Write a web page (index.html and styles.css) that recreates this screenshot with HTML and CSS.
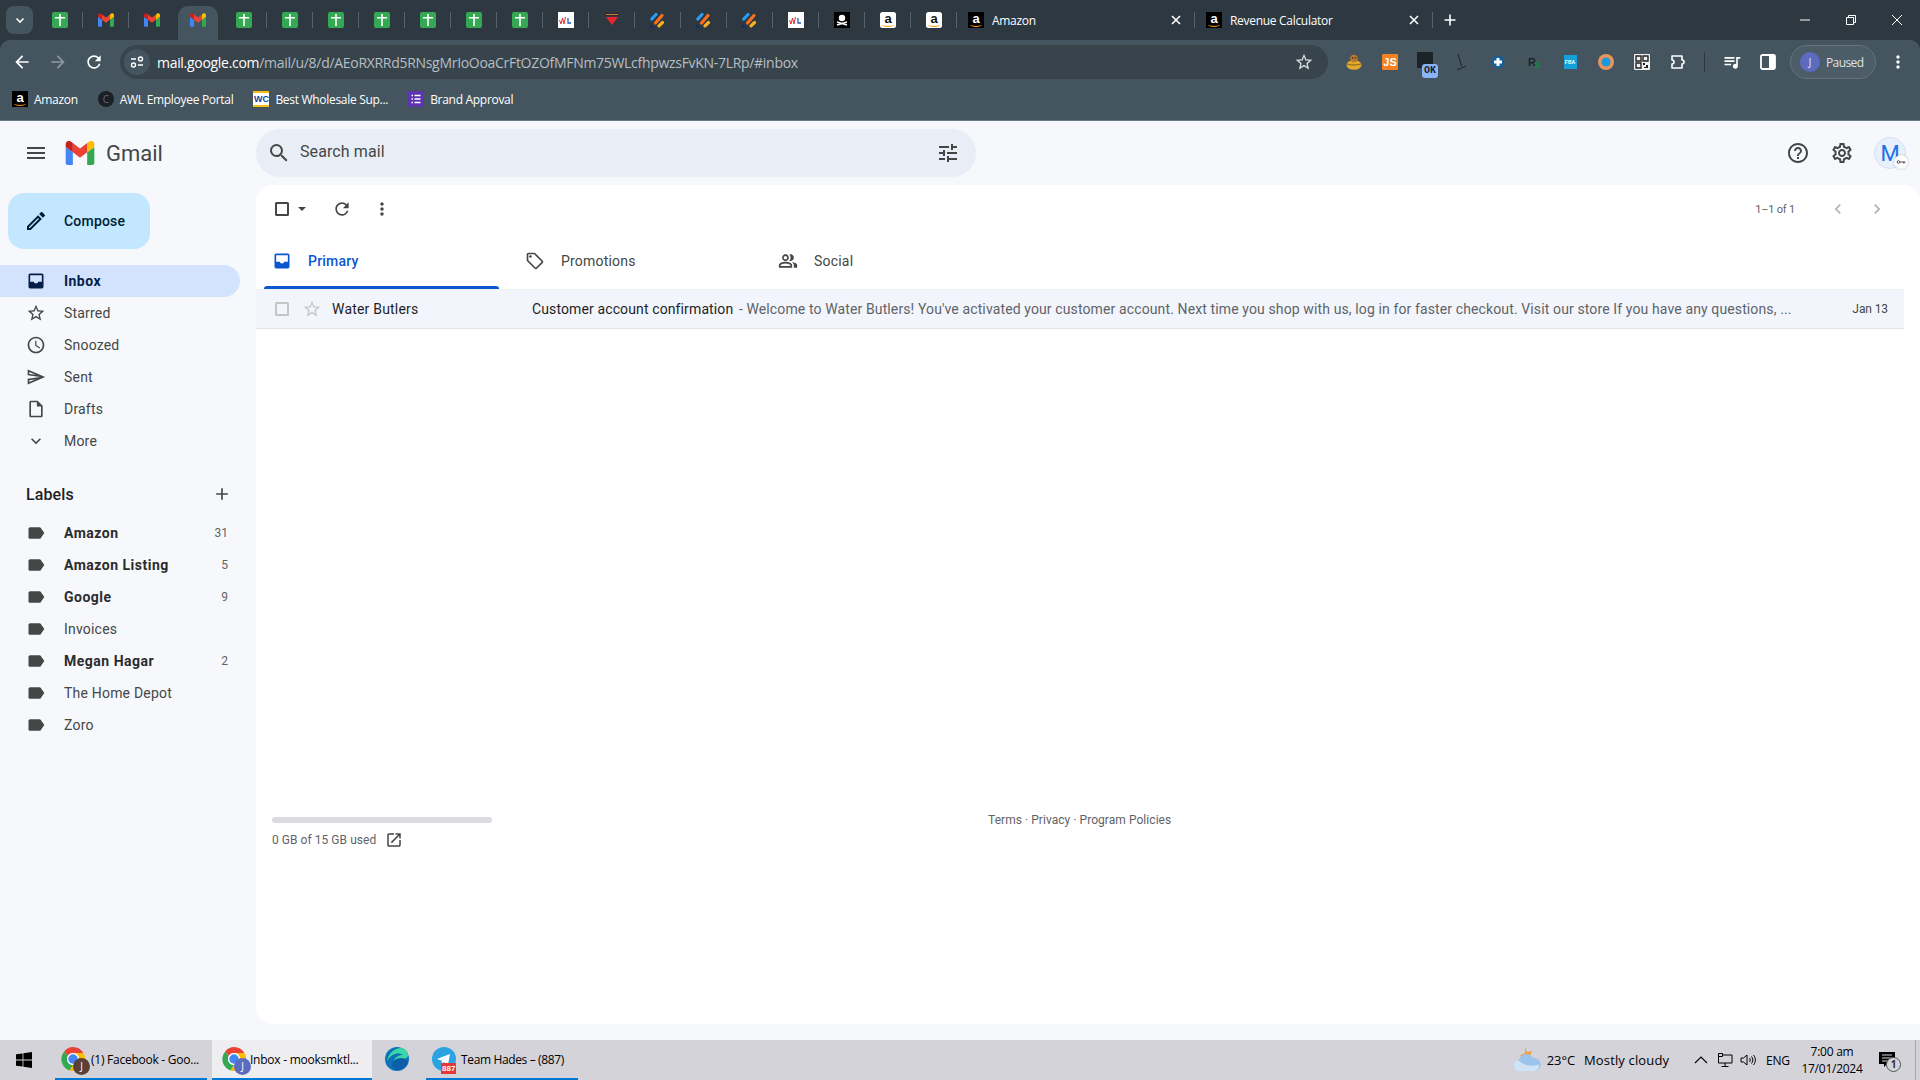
FILE: index.html
```html
<!DOCTYPE html>
<html lang="en">
<head>
<meta charset="utf-8">
<title>Inbox - Gmail</title>
<link rel="stylesheet" href="styles.css">
</head>
<body>
<svg class="defs" width="0" height="0" aria-hidden="true">
  <symbol id="i-sheet" viewBox="0 0 16 16"><rect width="16" height="16" rx="2" fill="#34a853"/><path d="M7.2 2h1.6v3H13v1.600H8.800V14H7.200V6.600H3V5h4.200z" fill="#fff"/></symbol>
  <symbol id="i-m" viewBox="0 -2 52.5 44">
    <path fill="#4285f4" d="M3.58 42h9.55V18.8L0 8.95v29.47C0 40.4 1.6 42 3.58 42"/>
    <path fill="#34a853" d="M39.4 42h9.55c1.98 0 3.58-1.6 3.58-3.58V8.95L39.4 18.8"/>
    <path fill="#fbbc04" d="M39.4 1.74V18.8l13.13-9.85V3.67c0-4.87-5.56-7.65-9.45-4.73"/>
    <path fill="#ea4335" d="M13.13 18.8V1.74L26.27 11.6 39.4 1.74V18.8L26.27 28.65"/>
    <path fill="#c5221f" d="M0 3.67v5.28l13.13 9.85V1.74L9.45-1.02C5.55-3.94 0-1.16 0 3.67"/>
  </symbol>
  <symbol id="i-wl" viewBox="0 0 16 16"><rect width="16" height="16" fill="#fff"/><path d="M1.500 8l1.500 4 1.500-6L6 12l1.500-7" fill="none" stroke="#d33" stroke-width="1"/><path d="M10 6v5h3" fill="none" stroke="#2a5db0" stroke-width="1.300"/></symbol>
  <symbol id="i-red" viewBox="0 0 16 16"><path d="M1 1h14v3H1z" fill="#3a2530"/><path d="M2 5h12l-6 8z" fill="#e8242c"/><path d="M2 2.500h12" stroke="#c9a23a" stroke-width=".8"/></symbol>
  <symbol id="i-stripe" viewBox="0 0 16 16"><path d="M1.800 7L6 2.500" stroke="#2d9cf4" stroke-width="3.200" stroke-linecap="round"/><path d="M5.500 11L12 3.500" stroke="#f4701f" stroke-width="3.200" stroke-linecap="round"/><path d="M9 13.800l3.500-3.300" stroke="#fbb01e" stroke-width="3.200" stroke-linecap="round"/><path d="M0 16h4.500L0 12z" fill="#12305c"/></symbol>
  <symbol id="i-skull" viewBox="0 0 16 16"><rect width="16" height="16" fill="#000"/><circle cx="8" cy="6" r="3.200" fill="#fff"/><path d="M3 10l10 3M13 10L3 13" stroke="#fff" stroke-width="1.600"/></symbol>
  <symbol id="i-close" viewBox="0 0 16 16"><path d="M4 4l8 8M12 4l-8 8" stroke="#fff" stroke-width="1.600" fill="none"/></symbol>
  <symbol id="i-back" viewBox="0 0 24 24"><path d="M20 11H7.830l5.590-5.590L12 4l-8 8 8 8 1.410-1.410L7.830 13H20v-2z"/></symbol>
  <symbol id="i-forward" viewBox="0 0 24 24"><path d="M12 4l-1.410 1.410L16.170 11H4v2h12.170l-5.580 5.590L12 20l8-8z"/></symbol>
  <symbol id="i-refresh" viewBox="0 0 24 24"><path d="M17.65 6.35A7.958 7.958 0 0012 4c-4.42 0-7.99 3.58-7.99 8s3.57 8 7.99 8c3.73 0 6.84-2.55 7.73-6h-2.08A5.99 5.99 0 0112 18c-3.31 0-6-2.69-6-6s2.69-6 6-6c1.66 0 3.14.69 4.22 1.78L13 11h7V4l-2.35 2.35z"/></symbol>
  <symbol id="i-menu" viewBox="0 0 24 24"><path d="M3 18h18v-2H3v2zm0-5h18v-2H3v2zm0-7v2h18V6H3z"/></symbol>
  <symbol id="i-edit" viewBox="0 0 24 24"><path d="M14.06 9.02l.92.92L5.92 19H5v-.92l9.06-9.06M17.66 3c-.25 0-.51.1-.7.29l-1.83 1.83 3.75 3.75 1.83-1.83a.996.996 0 000-1.41l-2.34-2.34c-.2-.2-.45-.29-.71-.29zm-3.6 3.19L3 17.25V21h3.75L17.81 9.94l-3.75-3.75z"/></symbol>
  <symbol id="i-inbox" viewBox="0 0 24 24"><path d="M5 3h14a2 2 0 012 2v14a2 2 0 01-2 2H5a2 2 0 01-2-2V5a2 2 0 012-2zm0 2.200V13h4.200a2.900 2.900 0 005.600 0H19V5.200H5z" fill-rule="evenodd"/></symbol>
  <symbol id="i-star" viewBox="0 0 24 24"><path d="M22 9.24l-7.19-.62L12 2 9.19 8.63 2 9.24l5.46 4.73L5.82 21 12 17.27 18.18 21l-1.63-7.03L22 9.24zM12 15.4l-3.76 2.27 1-4.28-3.32-2.88 4.38-.38L12 6.1l1.71 4.04 4.38.38-3.32 2.88 1 4.28L12 15.4z"/></symbol>
  <symbol id="i-clock" viewBox="0 0 24 24"><path d="M11.99 2C6.47 2 2 6.48 2 12s4.47 10 9.99 10C17.52 22 22 17.52 22 12S17.52 2 11.99 2zM12 20c-4.42 0-8-3.58-8-8s3.58-8 8-8 8 3.58 8 8-3.58 8-8 8zm.5-13H11v6l5.25 3.15.75-1.23-4.5-2.67z"/></symbol>
  <symbol id="i-send" viewBox="0 0 24 24"><path d="M4.01 6.03l7.51 3.22-7.52-1 .01-2.22m7.5 8.72L4 17.97v-2.22l7.51-1M2.01 3L2 10l15 2-15 2 .01 7L23 12 2.01 3z"/></symbol>
  <symbol id="i-draft" viewBox="0 0 24 24"><path d="M14 2H6c-1.1 0-1.99.9-1.99 2L4 20c0 1.1.89 2 1.99 2H18c1.1 0 2-.9 2-2V8l-6-6zM6 20V4h7v5h5v11H6z"/></symbol>
  <symbol id="i-more" viewBox="0 0 24 24"><path d="M16.59 8.59L12 13.17 7.41 8.59 6 10l6 6 6-6z"/></symbol>
  <symbol id="i-label" viewBox="0 0 24 24"><path d="M17.63 5.84C17.27 5.33 16.67 5 16 5L5 5.01C3.9 5.01 3 5.9 3 7v10c0 1.1.9 1.99 2 1.99L16 19c.67 0 1.27-.33 1.63-.84L22 12l-4.37-6.16z"/></symbol>
  <symbol id="i-add" viewBox="0 0 24 24"><path d="M19 13h-6v6h-2v-6H5v-2h6V5h2v6h6v2z"/></symbol>
  <symbol id="i-search" viewBox="0 0 24 24"><path d="M15.5 14h-.79l-.28-.27A6.47 6.47 0 0016 9.5 6.5 6.5 0 109.5 16c1.61 0 3.09-.59 4.23-1.57l.27.28v.79l5 4.99L20.49 19l-4.99-5zm-6 0C7.01 14 5 11.99 5 9.5S7.01 5 9.5 5 14 7.01 14 9.5 11.99 14 9.5 14z"/></symbol>
  <symbol id="i-tune" viewBox="0 0 24 24"><path d="M3 17v2h6v-2H3zM3 5v2h10V5H3zm10 16v-2h8v-2h-8v-2h-2v6h2zM7 9v2H3v2h4v2h2V9H7zm14 4v-2H11v2h10zm-6-4h2V7h4V5h-4V3h-2v6z"/></symbol>
  <symbol id="i-vert" viewBox="0 0 24 24"><path d="M12 8c1.1 0 2-.9 2-2s-.9-2-2-2-2 .9-2 2 .9 2 2 2zm0 2c-1.1 0-2 .9-2 2s.9 2 2 2 2-.9 2-2-.9-2-2-2zm0 6c-1.1 0-2 .9-2 2s.9 2 2 2 2-.9 2-2-.9-2-2-2z"/></symbol>
  <symbol id="i-help" viewBox="0 0 24 24"><path d="M11 18h2v-2h-2v2zm1-16C6.48 2 2 6.48 2 12s4.48 10 10 10 10-4.48 10-10S17.52 2 12 2zm0 18c-4.41 0-8-3.59-8-8s3.59-8 8-8 8 3.59 8 8-3.59 8-8 8zm0-14c-2.21 0-4 1.79-4 4h2c0-1.1.9-2 2-2s2 .9 2 2c0 2-3 1.75-3 5h2c0-2.25 3-2.5 3-5 0-2.21-1.79-4-4-4z"/></symbol>
  <symbol id="i-gear" viewBox="0 0 24 24"><path d="M19.43 12.98c.04-.32.07-.64.07-.98 0-.34-.03-.66-.07-.98l2.11-1.65c.19-.15.24-.42.12-.64l-2-3.46c-.09-.16-.26-.25-.44-.25-.06 0-.12.01-.17.03l-2.49 1c-.52-.4-1.08-.73-1.69-.98l-.38-2.65C14.46 2.18 14.25 2 14 2h-4c-.25 0-.46.18-.49.42l-.38 2.65c-.61.25-1.17.59-1.69.98l-2.49-1c-.06-.02-.12-.03-.18-.03-.17 0-.34.09-.43.25l-2 3.46c-.13.22-.07.49.12.64l2.11 1.65c-.04.32-.07.65-.07.98 0 .33.03.66.07.98l-2.11 1.65c-.19.15-.24.42-.12.64l2 3.46c.09.16.26.25.44.25.06 0 .12-.01.17-.03l2.49-1c.52.4 1.08.73 1.69.98l.38 2.65c.03.24.24.42.49.42h4c.25 0 .46-.18.49-.42l.38-2.65c.61-.25 1.17-.59 1.69-.98l2.49 1c.06.02.12.03.18.03.17 0 .34-.09.43-.25l2-3.46c.12-.22.07-.49-.12-.64l-2.11-1.65zm-1.98-1.71c.04.31.05.52.05.73 0 .21-.02.43-.05.73l-.14 1.13.89.7 1.08.84-.7 1.21-1.27-.51-1.04-.42-.9.68c-.43.32-.84.56-1.25.73l-1.06.43-.16 1.13-.2 1.35h-1.4l-.19-1.35-.16-1.13-1.06-.43c-.43-.18-.83-.41-1.23-.71l-.91-.7-1.06.43-1.27.51-.7-1.21 1.08-.84.89-.7-.14-1.13c-.03-.31-.05-.54-.05-.74s.02-.43.05-.73l.14-1.13-.89-.7-1.08-.84.7-1.21 1.27.51 1.04.42.9-.68c.43-.32.84-.56 1.25-.73l1.06-.43.16-1.13.2-1.35h1.39l.19 1.35.16 1.13 1.06.43c.43.18.83.41 1.23.71l.91.7 1.06-.43 1.27-.51.7 1.21-1.07.85-.89.7.14 1.13zM12 8c-2.21 0-4 1.79-4 4s1.79 4 4 4 4-1.79 4-4-1.79-4-4-4zm0 6c-1.1 0-2-.9-2-2s.9-2 2-2 2 .9 2 2-.9 2-2 2z"/></symbol>
  <symbol id="i-tag" viewBox="0 0 24 24"><path d="M21.41 11.58l-9-9C12.05 2.22 11.55 2 11 2H4c-1.1 0-2 .9-2 2v7c0 .55.22 1.05.59 1.42l9 9c.36.36.86.58 1.41.58s1.05-.22 1.41-.59l7-7c.37-.36.59-.86.59-1.41s-.23-1.06-.59-1.42zM13 20.01L4 11V4h7v-.01l9 9-7 7.02z"/><circle cx="6.5" cy="6.5" r="1.5"/></symbol>
  <symbol id="i-people" viewBox="0 0 24 24"><path d="M16.67 13.13C18.04 14.06 19 15.32 19 17v3h4v-3c0-2.18-3.57-3.47-6.33-3.87zM15 12c2.21 0 4-1.79 4-4s-1.79-4-4-4c-.47 0-.91.1-1.33.24a5.98 5.98 0 010 7.52c.42.14.86.24 1.33.24zM9 12c2.21 0 4-1.79 4-4s-1.79-4-4-4-4 1.79-4 4 1.79 4 4 4zm0-6c1.1 0 2 .9 2 2s-.9 2-2 2-2-.9-2-2 .9-2 2-2zM9 13c-2.67 0-8 1.34-8 4v3h16v-3c0-2.66-5.33-4-8-4zm6 5H3v-.99C3.2 16.29 6.3 15 9 15s5.8 1.29 6 2z"/></symbol>
  <symbol id="i-left" viewBox="0 0 24 24"><path d="M15.41 7.41L14 6l-6 6 6 6 1.41-1.41L10.83 12z"/></symbol>
  <symbol id="i-right" viewBox="0 0 24 24"><path d="M10 6L8.59 7.41 13.17 12l-4.58 4.59L10 18l6-6z"/></symbol>
  <symbol id="i-open" viewBox="0 0 24 24"><path d="M19 19H5V5h7V3H5a2 2 0 00-2 2v14a2 2 0 002 2h14c1.1 0 2-.9 2-2v-7h-2v7zM14 3v2h3.59l-9.83 9.83 1.41 1.41L19 6.41V10h2V3h-7z"/></symbol>
  <symbol id="i-puzzle" viewBox="0 0 16 16"><path d="M2 2H12V6A2 2 0 0 1 12 10V14H2V10A2 2 0 0 0 2 6Z" fill="none" stroke="#fff" stroke-width="1.600" stroke-linejoin="round"/></symbol>
  <symbol id="i-queue" viewBox="0 0 24 24"><path d="M15 6H3v2h12V6zm0 4H3v2h12v-2zM3 16h8v-2H3v2zM17 6v8.18c-.31-.11-.65-.18-1-.18-1.66 0-3 1.34-3 3s1.34 3 3 3 3-1.34 3-3V8h3V6h-5z"/></symbol>
  <symbol id="i-chrome" viewBox="0 0 24 24">
    <path d="M12 0a12 12 0 0 1 10.400 6H12a6 6 0 0 0-5.200 3L3.200 4.400A12 12 0 0 1 12 0z" fill="#ea4335"/>
    <path d="M3.200 4.400L6.800 9a6 6 0 0 0 5.200 9l-3.400 5.500A12 12 0 0 1 3.200 4.400z" fill="#34a853"/>
    <path d="M22.400 6A12 12 0 0 1 8.600 23.500L12 18a6 6 0 0 0 5.200-9 6 6 0 0 0-5.200-3z" fill="#fbbc04"/>
    <circle cx="12" cy="12" r="6" fill="#fff"/><circle cx="12" cy="12" r="4.700" fill="#4285f4"/>
  </symbol>
</svg>

<header class="tabstrip">
  <div class="tablist-btn"><svg class="ic16" viewBox="0 0 16 16"><path d="M4.500 6.500L8 10l3.500-3.500" fill="none" stroke="#fff" stroke-width="1.600"/></svg></div>
  <div class="tab sep"><svg class="fav"><use href="#i-sheet"/></svg></div>
  <div class="tab sep"><svg class="fav"><use href="#i-m"/></svg></div>
  <div class="tab"><svg class="fav"><use href="#i-m"/></svg></div>
  <div class="tab active"><svg class="fav"><use href="#i-m"/></svg></div>
  <div class="tab sep"><svg class="fav"><use href="#i-sheet"/></svg></div>
  <div class="tab sep"><svg class="fav"><use href="#i-sheet"/></svg></div>
  <div class="tab sep"><svg class="fav"><use href="#i-sheet"/></svg></div>
  <div class="tab sep"><svg class="fav"><use href="#i-sheet"/></svg></div>
  <div class="tab sep"><svg class="fav"><use href="#i-sheet"/></svg></div>
  <div class="tab sep"><svg class="fav"><use href="#i-sheet"/></svg></div>
  <div class="tab sep"><svg class="fav"><use href="#i-sheet"/></svg></div>
  <div class="tab sep"><svg class="fav"><use href="#i-wl"/></svg></div>
  <div class="tab sep"><svg class="fav"><use href="#i-red"/></svg></div>
  <div class="tab sep"><svg class="fav"><use href="#i-stripe"/></svg></div>
  <div class="tab sep"><svg class="fav"><use href="#i-stripe"/></svg></div>
  <div class="tab sep"><svg class="fav"><use href="#i-stripe"/></svg></div>
  <div class="tab sep"><svg class="fav"><use href="#i-wl"/></svg></div>
  <div class="tab sep"><svg class="fav"><use href="#i-skull"/></svg></div>
  <div class="tab sep"><span class="amz light">a</span></div>
  <div class="tab sep"><span class="amz light">a</span></div>
  <div class="tab wide sep"><span class="amz">a</span><span class="tab-title">Amazon</span><svg class="tab-close"><use href="#i-close"/></svg></div>
  <div class="tab wide sep"><span class="amz">a</span><span class="tab-title">Revenue Calculator</span><svg class="tab-close"><use href="#i-close"/></svg></div>
  <div class="newtab"><svg class="ic16" viewBox="0 0 16 16"><path d="M8 2.500v11M2.500 8h11" stroke="#fff" stroke-width="1.600" fill="none"/></svg></div>
  <div class="winctl">
    <svg class="ic16" viewBox="0 0 16 16"><path d="M3 8h10" stroke="#fff"/></svg>
    <svg class="ic16" viewBox="0 0 16 16"><path d="M3.500 5.500h7v7h-7zM5.500 5.500v-2h7v7h-2" fill="none" stroke="#fff"/></svg>
    <svg class="ic16" viewBox="0 0 16 16"><path d="M3 3l10 10M13 3L3 13" stroke="#fff"/></svg>
  </div>
</header>

<nav class="toolbar">
  <div class="tb-btn"><svg class="ic20 white"><use href="#i-back"/></svg></div>
  <div class="tb-btn"><svg class="ic20 dim"><use href="#i-forward"/></svg></div>
  <div class="tb-btn"><svg class="ic20 white"><use href="#i-refresh"/></svg></div>
  <div class="omnibox">
    <div class="site-chip"><svg class="ic16" viewBox="0 0 16 16"><path d="M2 5h5M9 11h5" stroke="#fff" stroke-width="1.500"/><circle cx="11.500" cy="5" r="2" fill="none" stroke="#fff" stroke-width="1.400"/><circle cx="4.500" cy="11" r="2" fill="none" stroke="#fff" stroke-width="1.400"/></svg></div>
    <div class="url"><span class="url-host">mail.google.com</span>/mail/u/8/d/AEoRXRRd5RNsgMrIoOoaCrFtOZOfMFNm75WLcfhpwzsFvKN-7LRp/#inbox</div>
    <svg class="ic20 star-bm"><use href="#i-star"/></svg>
  </div>
  <div class="ext first"><svg class="ic16" viewBox="0 0 16 16"><ellipse cx="8" cy="11" rx="7.500" ry="4.800" fill="#e0a92e"/><path d="M.5 9.500c3 2 12 2 15 0" stroke="#8a5d12" fill="none"/><circle cx="8" cy="4.500" r="3.800" fill="#b9772f"/><circle cx="6.600" cy="4" r=".7" fill="#222"/><circle cx="9.400" cy="4" r=".7" fill="#222"/></svg></div>
  <div class="ext"><span class="ext-js">JS</span></div>
  <div class="ext ext-ok"><span class="ok-dark"></span><span class="ok-badge">OK</span></div>
  <div class="ext"><svg class="ic16" viewBox="0 0 16 16"><path d="M4 0l3.500 12M3 16l9-4" stroke="#1d2327" stroke-width="1" fill="none"/></svg></div>
  <div class="ext"><svg class="ic16" viewBox="0 0 16 16"><circle cx="8" cy="8" r="6.500" fill="#155f94"/><path d="M8 4v8M4 8h8" stroke="#fff" stroke-width="3"/></svg></div>
  <div class="ext"><span class="ext-rs">R<b class="ext-rs-s">s</b></span></div>
  <div class="ext"><span class="ext-fba">FBA</span></div>
  <div class="ext"><svg class="ic16" viewBox="0 0 16 16"><circle cx="8" cy="8" r="8" fill="#e8935a"/><circle cx="8" cy="8" r="4.600" fill="#1899dc"/></svg></div>
  <div class="ext"><svg class="ic16" viewBox="0 0 16 16"><rect width="16" height="16" rx="1" fill="#eee"/><path d="M2 2h5v5H2zM9 2h5v5H9zM2 9h5v5H2z" fill="none" stroke="#222" stroke-width="1.400"/><path d="M9 9h2v2H9zM12 11h2v3h-4v-1h2z" fill="#222"/></svg></div>
  <div class="ext"><svg class="ic16"><use href="#i-puzzle"/></svg></div>
  <span class="tb-divider"></span>
  <div class="tb-btn"><svg class="ic20 white"><use href="#i-queue"/></svg></div>
  <div class="tb-btn"><svg class="ic16" viewBox="0 0 16 16"><rect x="1" y="1" width="14" height="14" rx="1.500" fill="none" stroke="#fff" stroke-width="1.800"/><rect x="9" y="1" width="6" height="14" fill="#fff"/></svg></div>
  <div class="paused"><span class="paused-av">J</span><span class="paused-txt">Paused</span></div>
  <div class="tb-btn end"><svg class="ic20 white"><use href="#i-vert"/></svg></div>
</nav>

<div class="bookmarks">
  <div class="bm"><span class="amz">a</span><span>Amazon</span></div>
  <div class="bm"><span class="bm-awl">C</span><span>AWL Employee Portal</span></div>
  <div class="bm"><span class="bm-wc">WC</span><span>Best Wholesale Sup...</span></div>
  <div class="bm"><svg class="fav" viewBox="0 0 16 16"><rect width="16" height="16" fill="#5e35b1"/><path d="M3.500 4.500h1.500M3.500 8h1.500M3.500 11.500h1.500M6.500 4.500h6M6.500 8h6M6.500 11.500h6" stroke="#fff" stroke-width="1.500"/></svg><span>Brand Approval</span></div>
</div>

<div class="app">
  <aside class="sidebar">
    <div class="brand">
      <div class="hamburger"><svg class="ic24 g5"><use href="#i-menu"/></svg></div>
      <svg class="gm-logo"><use href="#i-m"/></svg>
      <span class="gm-word">Gmail</span>
    </div>
    <div class="compose"><svg class="ic24 ink"><use href="#i-edit"/></svg><span>Compose</span></div>
    <ul class="nav">
      <li class="nav-item current"><svg class="ic20 navy"><use href="#i-inbox"/></svg><span>Inbox</span></li>
      <li class="nav-item"><svg class="ic20 g4"><use href="#i-star"/></svg><span>Starred</span></li>
      <li class="nav-item"><svg class="ic20 g4"><use href="#i-clock"/></svg><span>Snoozed</span></li>
      <li class="nav-item"><svg class="ic20 g4"><use href="#i-send"/></svg><span>Sent</span></li>
      <li class="nav-item"><svg class="ic20 g4"><use href="#i-draft"/></svg><span>Drafts</span></li>
      <li class="nav-item"><svg class="ic20 g4"><use href="#i-more"/></svg><span>More</span></li>
    </ul>
    <div class="labels-head"><span>Labels</span><svg class="ic20 g4"><use href="#i-add"/></svg></div>
    <ul class="nav">
      <li class="nav-item unread"><svg class="ic20 g4"><use href="#i-label"/></svg><span>Amazon</span><em class="count">31</em></li>
      <li class="nav-item unread"><svg class="ic20 g4"><use href="#i-label"/></svg><span>Amazon Listing</span><em class="count">5</em></li>
      <li class="nav-item unread"><svg class="ic20 g4"><use href="#i-label"/></svg><span>Google</span><em class="count">9</em></li>
      <li class="nav-item"><svg class="ic20 g4"><use href="#i-label"/></svg><span>Invoices</span></li>
      <li class="nav-item unread"><svg class="ic20 g4"><use href="#i-label"/></svg><span>Megan Hagar</span><em class="count">2</em></li>
      <li class="nav-item"><svg class="ic20 g4"><use href="#i-label"/></svg><span>The Home Depot</span></li>
      <li class="nav-item"><svg class="ic20 g4"><use href="#i-label"/></svg><span>Zoro</span></li>
    </ul>
  </aside>

  <main class="content">
    <div class="topbar">
      <div class="searchbox">
        <svg class="ic24 g4"><use href="#i-search"/></svg>
        <span class="search-ph">Search mail</span>
        <svg class="ic24 g4 tune"><use href="#i-tune"/></svg>
      </div>
      <div class="top-icons">
        <svg class="ic24 g4"><use href="#i-help"/></svg>
        <svg class="ic24 g4"><use href="#i-gear"/></svg>
        <div class="avatar"><span>M</span><span class="keybadge"><svg class="ic10" viewBox="0 0 12 12"><circle cx="3" cy="6" r="1.600" fill="none" stroke="#444" stroke-width="1.100"/><path d="M4.600 6H11M9 6v1.600M10.600 6v1.400" stroke="#444" stroke-width="1.100" fill="none"/></svg></span></div>
      </div>
    </div>

    <section class="card">
      <div class="actions">
        <span class="check dark"></span>
        <span class="caret"></span>
        <svg class="ic20 g4 act-refresh"><use href="#i-refresh"/></svg>
        <svg class="ic20 g4 act-more"><use href="#i-vert"/></svg>
        <span class="pager">1–1 of 1</span>
        <svg class="ic20 faint"><use href="#i-left"/></svg>
        <svg class="ic20 faint"><use href="#i-right"/></svg>
      </div>
      <div class="cats">
        <div class="cat selected"><svg class="ic20 blue"><use href="#i-inbox"/></svg><span>Primary</span></div>
        <div class="cat"><svg class="ic20 g4"><use href="#i-tag"/></svg><span>Promotions</span></div>
        <div class="cat"><svg class="ic20 g4"><use href="#i-people"/></svg><span>Social</span></div>
      </div>
      <div class="mail-row">
        <span class="check light"></span>
        <svg class="ic20 lightgrey row-star"><use href="#i-star"/></svg>
        <span class="sender">Water Butlers</span>
        <span class="line"><span class="subject">Customer account confirmation</span><span class="snippet"> - Welcome to Water Butlers! You've activated your customer account. Next time you shop with us, log in for faster checkout. Visit our store If you have any questions, ...</span></span>
        <span class="date">Jan 13</span>
      </div>
      <div class="card-foot">
        <div class="storage">
          <div class="storage-bar"></div>
          <div class="storage-txt"><span>0 GB of 15 GB used</span><svg class="ic16b g4"><use href="#i-open"/></svg></div>
        </div>
        <div class="policies">Terms · Privacy · Program Policies</div>
      </div>
    </section>
  </main>
</div>

<footer class="taskbar">
  <div class="start"><svg class="ic16" viewBox="0 0 16 16"><path d="M0 2.300l6.600-.9v6.200H0zM7.400 1.300L16 0v7.600H7.400zM0 8.400h6.600v6.200L0 13.700zM7.400 8.400H16V16l-8.600-1.300z" fill="#000"/></svg></div>
  <div class="task running t1"><span class="task-icon wide-gap"><svg class="ic24"><use href="#i-chrome"/></svg><span class="mini brown">J</span></span><span class="task-txt">(1) Facebook - Goo...</span></div>
  <div class="task running t2 focused"><span class="task-icon"><svg class="ic24"><use href="#i-chrome"/></svg><span class="mini indigo">J</span></span><span class="task-txt">Inbox - mooksmktl...</span></div>
  <div class="task t3"><svg class="ic24" viewBox="0 0 24 24"><circle cx="12" cy="12" r="12" fill="#0c73b8"/><path d="M2 15C3 6 10 1 16 1c4 0 7 3 7 7 0 3-3 4-6 4-3 0-6 0-8 3 0-5 5-7 9-7-3-3-13-2-16 7z" fill="#3ad7a8"/><path d="M7 19c0-5 4-8 9-8 3 0 5 1 7 3-1 5-5 9-10 9-3 0-6-2-6-4z" fill="#0c5ea8"/></svg></div>
  <div class="task running t4"><span class="task-icon"><svg class="ic24" viewBox="0 0 24 24"><circle cx="12" cy="12" r="12" fill="#2aa3e0"/><path d="M5 12l13-5-2 11-4-3-2 2-.5-3.500L16 9l-7 4.500z" fill="#fff"/></svg><span class="tg-badge">887</span></span><span class="task-txt">Team Hades – (887)</span></div>
  <div class="tray">
    <svg class="weather" viewBox="0 0 28 28"><path d="M12 1l2 5 5-1-2 6-7 1-3-3 5-2z" fill="#f2a23a"/><path d="M6 25a5.500 5.500 0 010-11 7.500 7.500 0 0114-2 6.500 6.500 0 012 13z" fill="#9cc4ea"/><path d="M6 25a5.500 5.500 0 01-1-10.900 20 20 0 0021 4.400 6.500 6.500 0 01-4 6.500z" fill="#cfe3f6"/></svg>
    <span class="temp">23°C</span>
    <span class="cond">Mostly cloudy</span>
    <svg class="ic16 caret-up" viewBox="0 0 16 16"><path d="M2 11l6-6 6 6" fill="none" stroke="#000" stroke-width="1.100"/></svg>
    <svg class="ic16 net" viewBox="0 0 16 16"><path d="M1.500 1.500h4v3h-4zM5.500 3H15v8H1.500V4.500M8 11v3M4.500 14.500h7" fill="none" stroke="#000" stroke-width="1"/></svg>
    <svg class="ic16 vol" viewBox="0 0 16 16"><path d="M1 6h2.500L7 3v10L3.500 10H1zM9.500 6c1 1 1 3 0 4M11.500 4.500c1.800 2 1.800 5 0 7M13.500 3c2.500 3 2.500 7 0 10" fill="none" stroke="#000" stroke-width="1"/></svg>
    <span class="lang">ENG</span>
    <div class="clock"><span>7:00 am</span><span>17/01/2024</span></div>
    <div class="notif"><svg class="ic16" viewBox="0 0 16 16"><path d="M0 0h16v12H8l-3 3v-3H0z" fill="#000"/><path d="M3 3h10M3 6h10M3 9h7" stroke="#d4d3d9" stroke-width="1"/></svg><span class="notif-n">1</span></div>
    <span class="desk-edge"></span>
  </div>
</footer>
</body>
</html>
```

FILE: styles.css
```css
* { box-sizing: border-box; }
html, body { margin: 0; padding: 0; }
body {
  width: 1920px; height: 1080px; overflow: hidden;
  display: flex; flex-direction: column;
  font-family: Roboto, "Liberation Sans", sans-serif;
  background: #2e3840; color: #1f1f1f;
}
ul { list-style: none; margin: 0; padding: 0; }
em { font-style: normal; }
.defs { position: absolute; }
.amz {
  position: relative; display: block; flex: none; width: 16px; height: 16px;
  background: #000; color: #fff; text-align: center; letter-spacing: 0;
  font: 700 13px/13px "Liberation Sans", sans-serif;
}
.amz.light { background: #fff; color: #111; border-radius: 2.5px; }
.amz::after {
  content: ""; position: absolute; left: 2px; right: 2px; bottom: 1px; height: 4px;
  border-bottom: 1.5px solid #f90; border-radius: 0 0 50% 50%;
}

.ic10 { width: 10px; height: 10px; display: block; }
.ic16 { width: 16px; height: 16px; display: block; flex: none; }
.ic16b { width: 18px; height: 18px; display: block; flex: none; }
.ic20 { width: 20px; height: 20px; display: block; flex: none; }
.ic24 { width: 24px; height: 24px; display: block; flex: none; }
.white { fill: #fff; } .dim { fill: #8d99a1; }
.g4 { fill: #444746; } .g5 { fill: #5f6368; } .ink { fill: #001d35; }
.navy { fill: #041e49; } .blue { fill: #0b57d0; } .faint { fill: #b0b3b5; }
.lightgrey { fill: #c4c7c5; }

/* browser chrome */
.tabstrip {
  height: 40px; flex: none; display: flex; align-items: center;
  background: #2e3840; color: #fff;
  font: 12px "Open Sans", "Noto Sans", sans-serif;
}
.tablist-btn {
  width: 27px; height: 28px; margin: 0 4px 0 6px; border-radius: 8px;
  background: #45555f; display: flex; align-items: center; justify-content: center;
}
.tab { position: relative; width: 46px; height: 40px; flex: none; display: flex; align-items: center; justify-content: center; }
.fav { width: 16px; height: 16px; display: block; flex: none; }
.tab.sep::after { content: ""; position: absolute; right: 0; top: 12px; height: 16px; width: 1px; background: #54626c; }
.tab.active::before {
  content: ""; position: absolute; left: 3px; right: 3px; top: 6px; bottom: 0;
  background: #45555f; border-radius: 10px 10px 0 0;
}
.tab.active .fav { position: relative; }
.tab.wide { width: 238px; justify-content: flex-start; padding-left: 11px; }
.tab-title { margin-left: 8px; flex: 1; letter-spacing: -.3px; }
.tab-close { width: 16px; height: 16px; margin-right: 11px; }
.newtab { width: 34px; display: flex; justify-content: center; }
.winctl { margin-left: auto; display: flex; gap: 30px; padding-right: 15px; }

.toolbar {
  height: 44px; flex: none; display: flex; align-items: center;
  background: #45555f; border-radius: 10px 10px 0 0; padding-left: 4px;
}
.tb-btn { width: 36px; height: 36px; flex: none; display: flex; align-items: center; justify-content: center; }
.tb-btn.end { margin-left: 4px; }
.omnibox {
  width: 1208px; height: 34px; margin-left: 8px; flex: none; border-radius: 17px;
  background: #38444c; display: flex; align-items: center; padding: 0 14px 0 4px;
}
.site-chip { width: 26px; height: 26px; border-radius: 50%; background: #45555f; display: flex; align-items: center; justify-content: center; flex: none; }
.url { margin-left: 7px; flex: 1; font: 14px "Open Sans", sans-serif; color: #b6bec4; letter-spacing: -.3px; white-space: nowrap; }
.url-host { color: #fff; }
.star-bm { fill: #d5dade; }
.ext { width: 36px; height: 36px; flex: none; display: flex; align-items: center; justify-content: center; position: relative; }
.ext.first { margin-left: 8px; }
.ext-js { width: 16px; height: 16px; background: #f5821f; color: #fff; font: 700 11px/16px "Liberation Sans", sans-serif; text-align: center; border-radius: 1px; }
.ok-dark { width: 16px; height: 16px; background: #1c2328; margin: -4px 0 0 -2px; }
.ok-badge { position: absolute; left: 14px; top: 20px; padding: 0 2px; background: #8ab4f8; color: #1c2328; border-radius: 3px; font: 700 10px/14px "Liberation Mono", monospace; }
.ext-rs { font: 700 11px "Liberation Sans", sans-serif; color: #1c2328; }
.ext-rs-s { color: #0f8a3c; margin-left: -2px; position: relative; top: 2px; }
.ext-fba { width: 13px; height: 14px; background: #14a0d8; color: #fff; font: 700 5px/14px "Liberation Sans", sans-serif; text-align: center; }
.tb-divider { width: 1px; height: 20px; background: #2e3840; margin: 0 9px 0 8px; flex: none; }
.paused {
  width: 86px; height: 34px; margin-left: 4px; flex: none; border-radius: 17px;
  border: 1px solid #64737d; background: #4d5d68; display: flex; align-items: center; padding-left: 9px;
  font: 12px "Open Sans", sans-serif; color: #dfe3e6;
}
.paused-av { width: 20px; height: 20px; border-radius: 50%; background: #5c6bc0; text-align: center; line-height: 20px; font-size: 11px; }
.paused-txt { margin-left: 6px; letter-spacing: -.6px; }

.bookmarks {
  height: 37px; flex: none; background: #45555f; border-bottom: 1px solid #6c7a84;
  display: flex; align-items: center; gap: 20px; padding: 0 0 6px 12px;
  font: 12px "Open Sans", sans-serif; color: #fff; letter-spacing: -.3px;
}
.bm { display: flex; align-items: center; gap: 6px; }
.bm-awl { width: 16px; height: 16px; border-radius: 50%; background: #1a2026; color: #667; font-size: 10px; line-height: 16px; text-align: center; }
.bm-wc { width: 16px; height: 16px; background: #fff; border-top: 2px solid #f4c20d; border-bottom: 2px solid #f4c20d; color: #123f9e; font: 700 9px/12px "Liberation Sans", sans-serif; text-align: center; letter-spacing: 0; }

/* gmail */
.app { flex: 1; min-height: 0; display: grid; grid-template-columns: 256px 1fr; background: #f6f8fc; }
.sidebar { font-size: 14px; letter-spacing: .2px; color: #444746; }
.brand { height: 64px; display: flex; align-items: center; }
.hamburger { margin-left: 24px; }
.hamburger .ic24 { fill: #444746; }
.gm-logo { width: 32px; height: 24px; margin-left: 16px; }
.gm-word { margin-left: 10px; font-size: 22px; color: #444746; letter-spacing: 0; }
.compose {
  margin: 8px 0 0 8px; width: 142px; height: 56px; border-radius: 16px;
  background: #c2e7ff; display: flex; align-items: center; padding-left: 16px; gap: 16px;
  color: #001d35; font-weight: 500;
}
.sidebar > .nav:first-of-type { margin-top: 16px; }
.nav-item {
  width: 240px; height: 32px; display: flex; align-items: center;
  padding: 0 12px 0 26px; gap: 18px; border-radius: 0 16px 16px 0;
}
.nav-item > span { flex: 1; }
.nav-item.current { background: #d3e3fd; color: #041e49; font-weight: 700; letter-spacing: .45px; }
.nav-item.unread { color: #2b2c2e; font-weight: 700; letter-spacing: .5px; }
.count { font-size: 12px; font-weight: 400; color: #5f6368; letter-spacing: 0; }
.labels-head {
  width: 240px; height: 40px; margin: 17px 0 3px; padding: 0 8px 0 26px;
  display: flex; align-items: center; justify-content: space-between;
  font-size: 16px; font-weight: 500; color: #1f1f1f; letter-spacing: .1px;
}
.content { display: flex; flex-direction: column; min-width: 0; padding-bottom: 16px; }
.topbar { height: 64px; flex: none; display: flex; align-items: center; }
.searchbox {
  width: 720px; height: 48px; border-radius: 24px; background: #e9eef6;
  display: flex; align-items: center; padding: 0 16px 0 11px;
}
.search-ph { margin-left: 9px; flex: 1; font-size: 16px; color: #444746; letter-spacing: .1px; padding-bottom: 3px; }
.top-icons { margin-left: auto; display: flex; align-items: center; gap: 20px; padding-right: 14px; }
.avatar {
  position: relative; width: 32px; height: 32px; border-radius: 50%;
  background: #e8f0fe; border: 1px solid #d5e0f2; color: #1a73e8; font-size: 22px;
  display: flex; align-items: center; justify-content: center;
}
.keybadge {
  position: absolute; right: -3px; bottom: -1px; width: 14px; height: 14px; border-radius: 50%;
  background: #fff; display: flex; align-items: center; justify-content: center; box-shadow: 0 0 2px rgba(0,0,0,.3);
}
.card { flex: 1; display: flex; flex-direction: column; background: #fff; border-radius: 16px 16px 0 16px; }
.actions { height: 48px; flex: none; display: flex; align-items: center; padding: 0 33px 0 19px; }
.check { width: 14px; height: 14px; border-radius: 1.5px; flex: none; display: block; }
.check.dark { border: 2px solid #444746; }
.check.light { border: 2px solid #c4c7c5; }
.caret { width: 0; height: 0; margin-left: 9px; border: 4px solid transparent; border-top: 4px solid #444746; border-bottom: 0; }
.act-refresh { margin-left: 26px; }
.act-more { margin-left: 20px; }
.pager { margin-left: auto; margin-right: 33px; font-size: 11px; color: #5f6368; letter-spacing: -.2px; }
.actions .faint + .faint { margin-left: 19px; }
.cats { height: 56px; flex: none; display: flex; }
.cat {
  position: relative; width: 253px; display: flex; align-items: center; gap: 16px; padding-left: 16px;
  font-size: 14px; color: #444746; letter-spacing: .2px;
}
.cat.selected { color: #0b57d0; font-weight: 500; }
.cat.selected::after { content: ""; position: absolute; left: 8px; right: 10px; bottom: 0; height: 3px; background: #0b57d0; border-radius: 3px 3px 0 0; }
.mail-row {
  width: 1648px; height: 40px; flex: none; display: flex; align-items: center;
  background: #f2f6fc; border-bottom: 1px solid #e1e5ea; border-top: 1px solid #ebeef2;
  padding: 0 16px 0 19px; font-size: 14px; color: #1f1f1f; letter-spacing: .2px;
}
.row-star { margin-left: 13px; }
.sender { margin-left: 10px; width: 200px; flex: none; }
.line { width: 1262px; flex: none; white-space: nowrap; }
.subject { letter-spacing: .12px; }
.snippet { color: #5f6368; letter-spacing: .12px; margin-left: 2px; }
.date { margin-left: auto; font-size: 12px; color: #444746; letter-spacing: -.1px; }
.card-foot { margin-top: 488px; padding-left: 16px; display: flex; font-size: 12px; color: #5f6368; letter-spacing: .05px; }
.storage { width: 220px; }
.storage-bar { height: 6px; border-radius: 3px; background: #dadce0; }
.storage-txt { margin-top: 8px; display: flex; align-items: center; gap: 9px; }
.policies { margin-left: 496px; margin-top: -4px; }

/* taskbar */
.taskbar {
  height: 40px; flex: none; background: #d4d3d9; display: flex; align-items: center; color: #000;
  font: 12px "Open Sans", sans-serif; letter-spacing: -.25px;
}
.start { width: 48px; height: 40px; display: flex; align-items: center; justify-content: center; flex: none; }
.task { position: relative; height: 40px; flex: none; display: flex; align-items: center; padding-bottom: 2px; }
.task.running::after { content: ""; position: absolute; left: 0; right: 0; bottom: 0; height: 2px; background: #0078d4; }
.task.t1 { width: 152px; padding-left: 6px; margin-left: 7px; }
.task.t2 { width: 160px; padding-left: 10px; margin-left: 5px; background: #eeedf0; }
.task.t3 { width: 54px; justify-content: center; padding-right: 4px; }
.task.t4 { width: 152px; padding-left: 6px; letter-spacing: -.36px; }
.t4 .task-icon { margin-right: 5px; }
.task-icon { position: relative; width: 24px; height: 24px; flex: none; margin-right: 4px; }
.task-icon.wide-gap { margin-right: 6px; }
.task-txt { white-space: nowrap; }
.mini { position: absolute; right: -5px; bottom: -4px; width: 17px; height: 17px; border-radius: 50%; color: #fff; font-size: 10px; line-height: 17px; text-align: center; letter-spacing: 0; }
.brown { background: #5a4036; } .indigo { background: #5c6bc0; }
.tg-badge { position: absolute; left: 9px; bottom: -3px; height: 11px; padding: 0 1px; background: #e53935; color: #fff; font: 700 8px/11px "Liberation Sans", sans-serif; letter-spacing: 0; }
.tray { margin-left: auto; display: flex; align-items: center; height: 40px; }
.weather { width: 28px; height: 28px; flex: none; }
.temp { margin-left: 6px; font-size: 13px; letter-spacing: -.1px; }
.cond { margin-left: 9px; font-size: 13px; letter-spacing: .15px; width: 89px; white-space: nowrap; }
.caret-up { margin-left: 20px; }
.net { margin-left: 8px; }
.vol { margin-left: 7px; }
.lang { margin-left: 10px; width: 24px; }
.clock { width: 84px; display: flex; flex-direction: column; align-items: center; line-height: 17px; }
.notif { position: relative; width: 16px; margin-left: 5px; }
.notif-n { position: absolute; left: 7px; top: 5px; width: 15px; height: 15px; border: 1px solid #555; border-radius: 50%; font: 700 10px/13px "Open Sans", sans-serif; text-align: center; background: #d4d3d9; color: #333; letter-spacing: 0; }
.desk-edge { width: 1px; height: 40px; margin-left: 20px; margin-right: 4px; background: #a9a8ae; }
```
